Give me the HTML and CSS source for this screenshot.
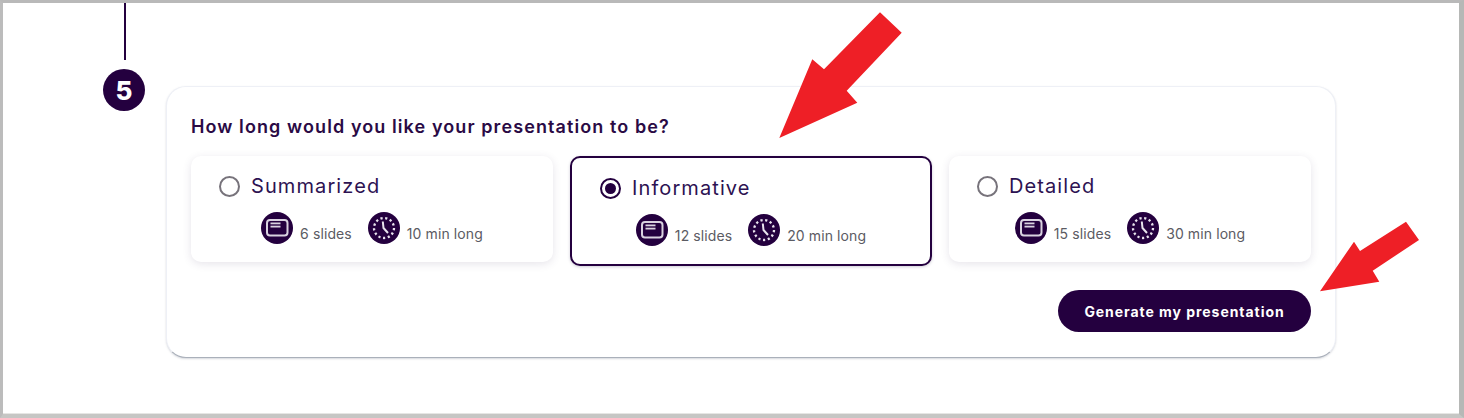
FILE: index.html
```html
<!DOCTYPE html>
<html lang="en">
<head>
<meta charset="utf-8">
<title>Presentation length</title>
<link rel="stylesheet" href="styles.css">
</head>
<body>
<svg class="defs" width="0" height="0" aria-hidden="true">
  <symbol id="slides" viewBox="0 0 32 32">
    <circle cx="16" cy="16" r="16" fill="#24003f"/>
    <rect x="6" y="8" width="20.5" height="15.5" rx="3" fill="none" stroke="#d9d2e0" stroke-width="2"/>
    <rect x="9.5" y="10.5" width="10" height="1.8" fill="#d9d2e0"/>
    <rect x="9.5" y="13.7" width="10" height="1.8" fill="#d9d2e0"/>
  </symbol>
  <symbol id="clock" viewBox="0 0 32 32">
    <circle cx="16" cy="16" r="16" fill="#24003f"/>
    <circle cx="16" cy="16" r="10" fill="none" stroke="#e9e4ee" stroke-width="2.3" stroke-dasharray="2.2 2.6"/>
    <path d="M14.8 9.5 L15.5 16 L20 21" fill="none" stroke="#e9e4ee" stroke-width="2"/>
  </symbol>
</svg>
<main class="frame">
  <div class="step">
    <div class="step-line"></div>
    <div class="step-num">5</div>
  </div>
  <section class="card">
    <h2 class="question">How long would you like your presentation to be?</h2>
    <div class="options">
      <div class="option">
        <div class="option-head"><span class="radio"></span><span class="option-name">Summarized</span></div>
        <div class="stats">
          <svg class="icon"><use href="#slides"/></svg><span class="stat-text">6 slides</span>
          <svg class="icon icon-second"><use href="#clock"/></svg><span class="stat-text">10 min long</span>
        </div>
      </div>
      <div class="option option-selected">
        <div class="option-head"><span class="radio radio-on"></span><span class="option-name">Informative</span></div>
        <div class="stats">
          <svg class="icon"><use href="#slides"/></svg><span class="stat-text">12 slides</span>
          <svg class="icon icon-second"><use href="#clock"/></svg><span class="stat-text">20 min long</span>
        </div>
      </div>
      <div class="option">
        <div class="option-head"><span class="radio"></span><span class="option-name">Detailed</span></div>
        <div class="stats">
          <svg class="icon"><use href="#slides"/></svg><span class="stat-text">15 slides</span>
          <svg class="icon icon-second"><use href="#clock"/></svg><span class="stat-text">30 min long</span>
        </div>
      </div>
    </div>
    <div class="actions"><button class="generate" type="button">Generate my presentation</button></div>
  </section>
  <svg class="arrows" width="1464" height="418" viewBox="0 0 1464 418" aria-hidden="true">
    <polygon fill="#ee1f26" points="880,12.3 901.7,32.7 846.7,90.7 857.3,102.7 779.3,138 812.3,59.3 824,69.3"/>
    <polygon fill="#ee1f26" points="1406,221.7 1419,240 1372.7,270.7 1379.3,281.7 1320,291.3 1354,241.7 1360,251"/>
  </svg>
</main>
</body>
</html>
```
FILE: styles.css
```css
* { box-sizing: border-box; }
html, body { margin: 0; padding: 0; background: #fff; }
body { width: 1464px; height: 418px; overflow: hidden; font-family: "Inter", "Noto Sans", sans-serif; color: #24003f; }
.defs { position: absolute; }
.frame {
  width: 1464px; height: 418px;
  border-style: solid; border-color: #b9b9b9 #b6b8b6 #c6c6c4 #bcbcbc;
  border-width: 3px 5px 4px 3px;
  background: #fff;
  box-shadow: inset 0 -1px 0 #e6e6e4;
  padding-left: 100px;
  display: flex; align-items: flex-start; gap: 21px;
  position: relative;
}
.step { width: 42px; display: flex; flex-direction: column; align-items: flex-start; }
.step-line { width: 2px; height: 57px; background: #24003f; margin: 0 0 9px 21px; }
.step-num {
  width: 42px; height: 42px; border-radius: 50%;
  background: #24003f; color: #fff;
  display: flex; align-items: center; justify-content: center;
  font-size: 26px; font-weight: 800;
}
.card {
  width: 1170px; height: 272px; margin-top: 83px;
  padding: 28px 24px 24px;
  border-radius: 20px;
  border: 1px solid #eef0f6;
  border-bottom-color: #aab0ba;
  box-shadow: 0 1px 2px rgba(90,100,120,.25);
  background: #fff;
}
.question { margin: 0 0 17px; font-size: 18px; line-height: 24px; font-weight: 600; letter-spacing: 1.09px; color: #2a0a45; }
.options { display: grid; grid-template-columns: repeat(3, 362px); column-gap: 17px; align-items: start; }
.option { height: 106px; padding: 16px 0 0; border-radius: 10px; background: #fff; box-shadow: 0 2px 9px rgba(60,50,90,.13); }
.option-selected { height: 110px; border: 2px solid #24003f; box-shadow: 0 1px 3px rgba(60,50,90,.25); }
.option-head { display: flex; align-items: center; height: 28px; padding-left: 28px; gap: 11px; }
.radio { width: 21px; height: 21px; border-radius: 50%; border: 2px solid #77737b; flex: none; }
.radio-on { border-color: #24003f; position: relative; }
.radio-on::after { content: ""; position: absolute; left: 3px; top: 3px; width: 11px; height: 11px; border-radius: 50%; background: #24003f; }
.option-name { font-size: 20px; line-height: 28px; letter-spacing: 1.1px; color: #2d1252; }
.stats { display: flex; align-items: flex-end; justify-content: center; margin-top: 12px; height: 32px; }
.icon { width: 32px; height: 32px; flex: none; }
.icon-second { margin-left: 16px; }
.stat-text { margin-left: 7px; font-size: 14px; line-height: 20px; letter-spacing: .1px; color: #5b5b63; }
.actions { display: flex; justify-content: flex-end; margin-top: 24px; }
.generate {
  width: 253px; height: 42px; border: 0; border-radius: 21px;
  background: #24003f; color: #fff;
  font-family: inherit; font-size: 14px; font-weight: 700; letter-spacing: .95px;
}
.arrows { position: absolute; left: -3px; top: -3px; pointer-events: none; }
```
